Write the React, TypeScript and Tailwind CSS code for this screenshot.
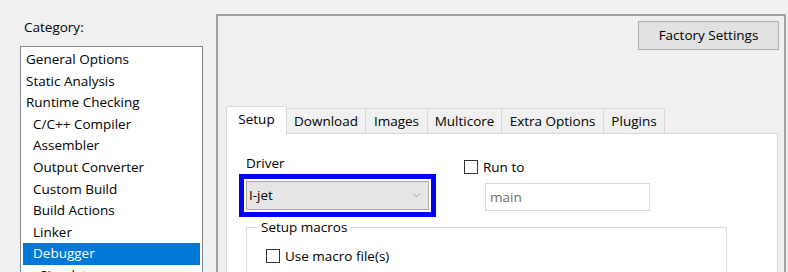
import { ChevronDown } from 'lucide-react';

const CATEGORIES: { label: string; indent: number; selected?: boolean }[] = [
  { label: 'General Options', indent: 0 },
  { label: 'Static Analysis', indent: 0 },
  { label: 'Runtime Checking', indent: 0 },
  { label: 'C/C++ Compiler', indent: 1 },
  { label: 'Assembler', indent: 1 },
  { label: 'Output Converter', indent: 1 },
  { label: 'Custom Build', indent: 1 },
  { label: 'Build Actions', indent: 1 },
  { label: 'Linker', indent: 1 },
  { label: 'Debugger', indent: 1, selected: true },
  { label: 'Simulator', indent: 2 },
];

const TABS = [
  { label: 'Setup', w: 'w-[61px]' },
  { label: 'Download', w: 'w-[79px]' },
  { label: 'Images', w: 'w-[62px]' },
  { label: 'Multicore', w: 'w-[74px]' },
  { label: 'Extra Options', w: 'w-[102px]' },
  { label: 'Plugins', w: 'w-[61px]' },
];

function Checkbox() {
  return <span className="block w-[14px] h-[14px] border border-[#333333] bg-white shrink-0" />;
}

export default function App() {
  return (
    <div
      className="w-[788px] h-[272px] overflow-hidden bg-[#f0f0f0] flex text-[13.5px] text-black"
      style={{ fontFamily: '"Open Sans", "Noto Sans", sans-serif' }}
    >
      {/* Category column */}
      <div className="w-[203px] shrink-0 pl-[20px] pt-[18px] flex flex-col">
        <div className="pl-[4px] h-[18px] leading-[18px]">Category:</div>
        <div className="mt-[10px] w-[183px] flex-1 border border-[#828790] bg-white pt-[2px] px-[2px]">
          {CATEGORIES.map((c) => (
            <div
              key={c.label}
              className={`h-[21.6px] leading-[21.6px] whitespace-nowrap ${
                c.selected ? 'bg-[#0078d7] text-white' : ''
              } ${c.indent === 0 ? 'pl-[3px]' : c.indent === 1 ? 'pl-[10px]' : 'pl-[17px]'}`}
            >
              {c.label}
            </div>
          ))}
        </div>
      </div>

      {/* Options panel */}
      <div className="ml-[13px] mt-[14px] w-[570px] shrink-0 border-t-2 border-l-2 border-r-2 border-[#a0a0a0] flex flex-col">
        <div className="flex justify-end pt-[5px] pr-[5px]">
          <button className="w-[141px] h-[29px] bg-[#e1e1e1] border border-[#adadad] leading-[27px]">
            Factory Settings
          </button>
        </div>

        <div className="ml-[8px] mr-[6px] mt-[56px] flex flex-col flex-1">
          <div className="flex items-end h-[27px]">
            {TABS.map((t, i) => (
              <div
                key={t.label}
                className={`${t.w} flex items-center justify-center border-t border-r border-[#d9d9d9] ${
                  i === 0
                    ? 'h-[28px] -mb-px relative z-10 bg-white border-l pb-[2px]'
                    : 'h-[25px] bg-[#f0f0f0]'
                }`}
              >
                {t.label}
              </div>
            ))}
          </div>

          <div className="flex-1 bg-white border border-[#d9d9d9] pl-[19px] pt-[21px]">
            <div className="flex items-start">
              <div className="w-[183px] flex flex-col">
                <div className="h-[17px] leading-[17px]">Driver</div>
                <div className="mt-[9px] h-[29px] bg-[#e5e5e5] border border-[#acacac] outline-[5px] outline-solid outline-[#0000f5] outline-offset-2 flex items-center justify-between pl-[2px] pr-[6px]">
                  <span>I-jet</span>
                  <ChevronDown className="w-[11px] h-[11px] text-[#7a7a7a]" strokeWidth={1.5} />
                </div>
              </div>

              <div className="ml-[35px] flex flex-col">
                <div className="mt-[5px] flex items-center gap-[5px] h-[14px]">
                  <Checkbox />
                  <span>Run to</span>
                </div>
                <div className="ml-[21px] mt-[9px] w-[165px] h-[28px] border border-[#d9d9d9] bg-white text-[#6d6d6d] flex items-center pl-[4px]">
                  main
                </div>
              </div>
            </div>

            <fieldset className="mt-[8px] w-[481px] h-[80px] border border-[#dcdcdc] px-[19px]">
              <legend className="ml-[-8px] px-[3px] h-[17px] leading-[17px]">Setup macros</legend>
              <div className="mt-[13px] flex items-center gap-[5px] h-[14px]">
                <Checkbox />
                <span>Use macro file(s)</span>
              </div>
            </fieldset>
          </div>
        </div>
      </div>
    </div>
  );
}
